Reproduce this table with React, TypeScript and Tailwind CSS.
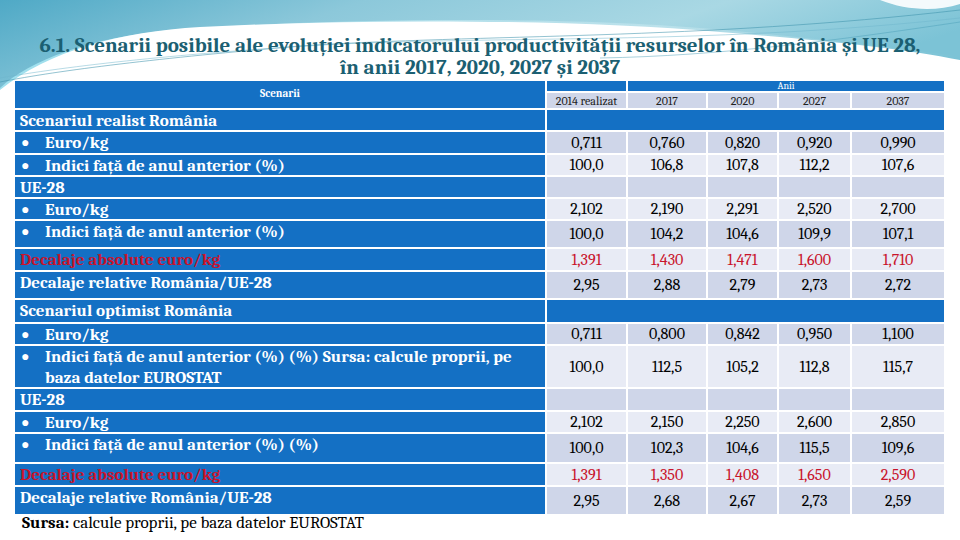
import React from "react";

type Row =
  | { kind: "band"; label: string; h: string }
  | {
      kind: "data";
      label: React.ReactNode;
      bullet?: boolean;
      red?: boolean;
      vals: string[];
      shade: "dark" | "light";
      h: string;
    };

const rows: Row[] = [
  { kind: "band", label: "Scenariul realist România", h: "h-[20px]" },
  { kind: "data", label: "Euro/kg", bullet: true, vals: ["0,711", "0,760", "0,820", "0,920", "0,990"], shade: "dark", h: "h-[21px]" },
  { kind: "data", label: "Indici  față de anul anterior (%)", bullet: true, vals: ["100,0", "106,8", "107,8", "112,2", "107,6"], shade: "light", h: "h-[20px]" },
  { kind: "data", label: "UE-28", vals: ["", "", "", "", ""], shade: "dark", h: "h-[20px]" },
  { kind: "data", label: "Euro/kg", bullet: true, vals: ["2,102", "2,190", "2,291", "2,520", "2,700"], shade: "light", h: "h-[20px]" },
  { kind: "data", label: "Indici față de anul anterior (%)", bullet: true, vals: ["100,0", "104,2", "104,6", "109,9", "107,1"], shade: "dark", h: "h-[26px]" },
  { kind: "data", label: "Decalaje absolute euro/kg", red: true, vals: ["1,391", "1,430", "1,471", "1,600", "1,710"], shade: "light", h: "h-[21px]" },
  { kind: "data", label: "Decalaje relative România/UE-28", vals: ["2,95", "2,88", "2,79", "2,73", "2,72"], shade: "dark", h: "h-[26px]" },
  { kind: "band", label: "Scenariul optimist România", h: "h-[22px]" },
  { kind: "data", label: "Euro/kg", bullet: true, vals: ["0,711", "0,800", "0,842", "0,950", "1,100"], shade: "dark", h: "h-[20px]" },
  {
    kind: "data",
    label: (
      <>
        Indici față de anul anterior (%) (%) Sursa: calcule proprii, pe
        <br />
        baza datelor EUROSTAT
      </>
    ),
    bullet: true,
    vals: ["100,0", "112,5", "105,2", "112,8", "115,7"],
    shade: "light",
    h: "h-[41px]",
  },
  { kind: "data", label: "UE-28", vals: ["", "", "", "", ""], shade: "dark", h: "h-[21px]" },
  { kind: "data", label: "Euro/kg", bullet: true, vals: ["2,102", "2,150", "2,250", "2,600", "2,850"], shade: "light", h: "h-[20px]" },
  { kind: "data", label: "Indici față de anul anterior (%) (%)", bullet: true, vals: ["100,0", "102,3", "104,6", "115,5", "109,6"], shade: "dark", h: "h-[28px]" },
  { kind: "data", label: "Decalaje absolute euro/kg", red: true, vals: ["1,391", "1,350", "1,408", "1,650", "2,590"], shade: "light", h: "h-[21px]" },
  { kind: "data", label: "Decalaje relative România/UE-28", vals: ["2,95", "2,68", "2,67", "2,73", "2,59"], shade: "dark", h: "h-[27px]" },
];

const years = ["2014 realizat", "2017", "2020", "2027", "2037"];

function Backdrop() {
  return (
    <svg className="absolute inset-0" width="960" height="540" viewBox="0 0 960 540">
      <defs>
        <linearGradient id="sky" x1="0" y1="0" x2="1" y2="0.3">
          <stop offset="0" stopColor="#4fa9c6" />
          <stop offset="0.35" stopColor="#8cc8da" />
          <stop offset="0.7" stopColor="#a9d8e4" />
          <stop offset="1" stopColor="#7cc3d6" />
        </linearGradient>
        <linearGradient id="glow" x1="0" y1="0" x2="1" y2="0">
          <stop offset="0" stopColor="#9fe0ee" />
          <stop offset="1" stopColor="#ffffff" stopOpacity="0" />
        </linearGradient>
      </defs>
      <rect x="0" y="0" width="960" height="100" fill="url(#sky)" />
      <path d="M0,88 C30,60 90,38 170,30 C330,18 560,16 700,28 C800,36 890,48 960,56 L960,540 L0,540 Z" fill="url(#glow)" />
      <path d="M0,90 C50,50 120,32 200,27 C380,18 580,20 720,32 C820,40 900,48 960,60 L960,540 L0,540 Z" fill="#ffffff" />
      <path d="M0,82 C60,70 160,58 300,46 C480,34 700,40 960,10" fill="none" stroke="#3f93ad" strokeWidth="0.8" opacity="0.7" />
      <path d="M0,78 C80,64 200,52 340,44 C520,36 720,44 960,18" fill="none" stroke="#6fb6cb" strokeWidth="0.7" opacity="0.7" />
      <path d="M600,58 C720,56 840,40 960,22" fill="none" stroke="#4a9fb8" strokeWidth="0.8" opacity="0.6" />
      <path d="M880,0 C905,10 935,12 960,4 L960,0 Z" fill="#ffffff" opacity="0.9" />
    </svg>
  );
}

export default function App() {
  return (
    <div className="relative w-[960px] h-[540px] overflow-hidden bg-white font-serif">
      <Backdrop />
      <div className="relative">
        <h1 className="pt-[34px] text-center text-[21px] leading-[22px] font-bold text-[#1b5f72]">
          6.1. Scenarii posibile ale evoluției indicatorului productivității resurselor în România și UE 28,
          <br />
          în anii 2017, 2020, 2027 și 2037
        </h1>

        <div className="mt-[3px] ml-[15px] grid grid-cols-[530px_79px_78px_69px_71px_92px] gap-[2px]">
          <div className="row-span-2 flex items-center justify-center bg-[#1470c4] text-[11px] font-bold text-white">
            Scenarii
          </div>
          <div className="h-[10px] bg-[#1470c4]" />
          <div className="col-span-4 flex h-[10px] items-center justify-center bg-[#1470c4] text-[10px] leading-[10px] text-white">
            Anii
          </div>
          {years.map((y) => (
            <div
              key={y}
              className="flex h-[15px] items-center justify-center bg-[#cfd6e9] text-[12px] leading-[12px] text-[#222]"
            >
              {y}
            </div>
          ))}

          {rows.map((r, i) =>
            r.kind === "band" ? (
              <React.Fragment key={i}>
                <div className={`${r.h} bg-[#1470c4] pl-[5px] text-[17px] leading-[21px] font-bold text-white`}>
                  {r.label}
                </div>
                <div className={`${r.h} col-span-5 bg-[#1470c4]`} />
              </React.Fragment>
            ) : (
              <React.Fragment key={i}>
                <div
                  className={`${r.h} flex items-start bg-[#1470c4] pl-[5px] text-[17px] leading-[21px] font-bold whitespace-nowrap ${
                    r.red ? "text-[#c8142c]" : "text-white"
                  }`}
                >
                  {r.bullet && <span className="w-[25px] shrink-0 pl-[1px] text-[14px]">●</span>}
                  <span>{r.label}</span>
                </div>
                {r.vals.map((v, j) => (
                  <div
                    key={j}
                    className={`${r.h} flex items-center justify-center text-[16px] ${
                      r.shade === "dark" ? "bg-[#cfd6e9]" : "bg-[#e8ebf5]"
                    } ${r.red ? "text-[#c8142c]" : "text-black"}`}
                  >
                    {v}
                  </div>
                ))}
              </React.Fragment>
            )
          )}
        </div>

        <p className="ml-[22px] text-[17px] leading-[18px] text-black">
          <span className="font-bold">Sursa:</span> calcule proprii, pe baza datelor EUROSTAT
        </p>
      </div>
    </div>
  );
}
